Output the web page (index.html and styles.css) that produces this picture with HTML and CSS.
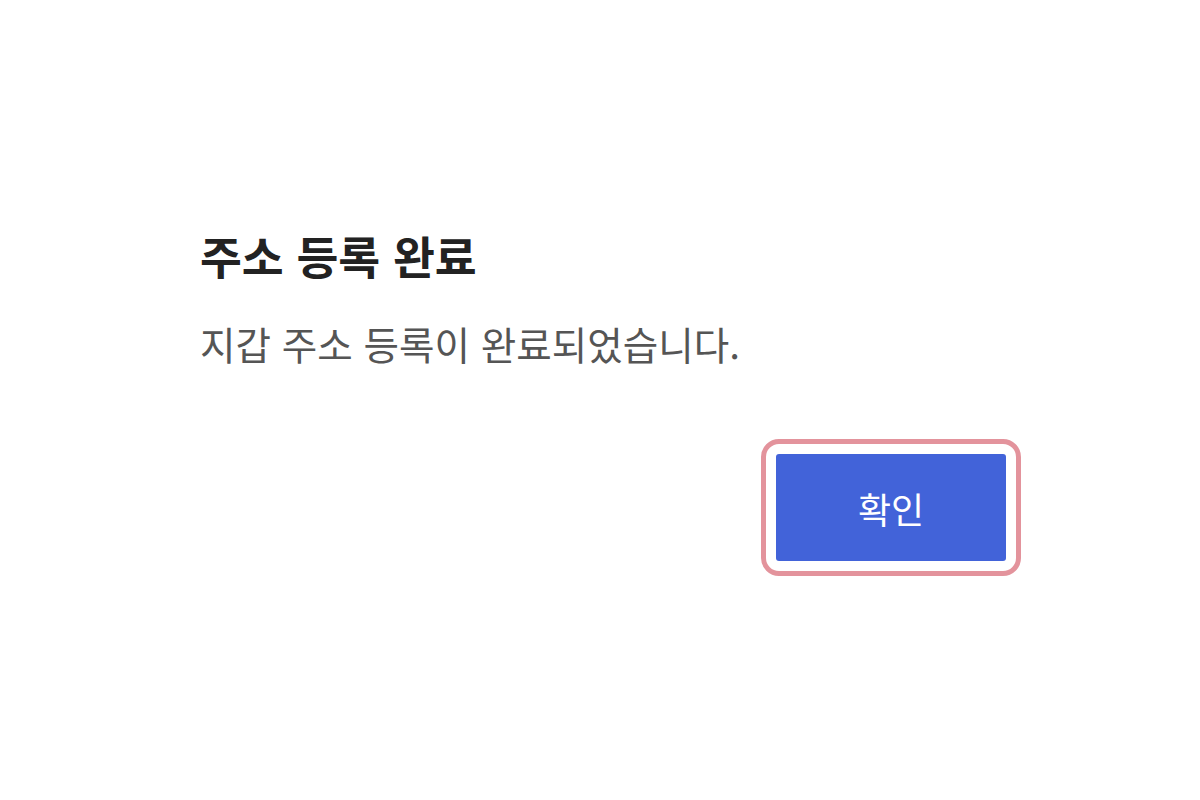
FILE: index.html
```html
<!DOCTYPE html>
<html lang="ko">
<head>
<meta charset="utf-8">
<link rel="stylesheet" href="styles.css">
</head>
<body>
<div class="page">
  <div class="dialog">
    <h1 class="title">주소 등록 완료</h1>
    <p class="message">지갑 주소 등록이 완료되었습니다.</p>
    <div class="actions">
      <button class="confirm">확인</button>
    </div>
  </div>
</div>
</body>
</html>
```
FILE: styles.css
```css
html, body {
  margin: 0;
  padding: 0;
  background: #ffffff;
}
.page {
  width: 1200px;
  height: 800px;
  box-sizing: border-box;
  padding: 225px 0 0 200px;
  font-family: "Noto Sans CJK KR", "Noto Sans", sans-serif;
}
.dialog {
  width: 806px;
  display: flex;
  flex-direction: column;
}
.title {
  margin: 0;
  font-size: 45.5px;
  line-height: 60px;
  font-weight: 700;
  color: #222222;
}
.message {
  margin: 32px 0 0 0;
  font-size: 38.6px;
  line-height: 52px;
  color: #555555;
}
.actions {
  display: flex;
  justify-content: flex-end;
  margin-top: 85px;
}
.confirm {
  width: 230px;
  height: 107px;
  border: none;
  border-radius: 3px;
  background: #4263d9;
  color: #ffffff;
  font-family: inherit;
  font-size: 36px;
  outline: 5px solid #e3939c;
  outline-offset: 10px;
}
```
